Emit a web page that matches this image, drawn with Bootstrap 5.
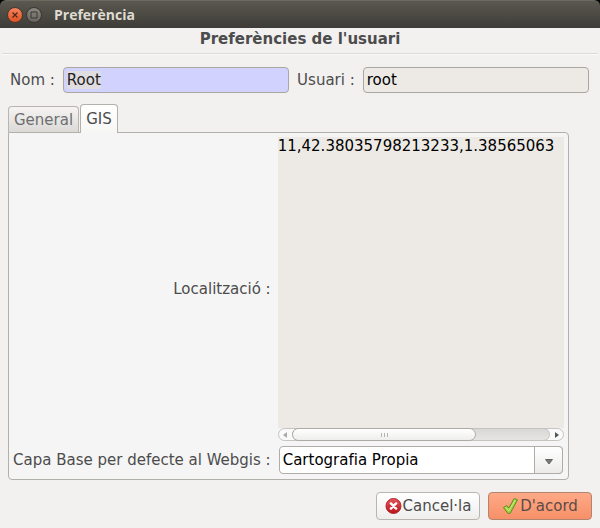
<!DOCTYPE html>
<html lang="ca">
<head>
<meta charset="utf-8">
<meta name="viewport" content="width=device-width, initial-scale=1">
<title>Preferència</title>
<link href="https://cdn.jsdelivr.net/npm/bootstrap@5.3.0/dist/css/bootstrap.min.css" rel="stylesheet">
<script src="https://cdn.jsdelivr.net/npm/bootstrap@5.3.0/dist/js/bootstrap.bundle.min.js"></script>
<style>
  body { font-family: "DejaVu Sans", sans-serif; font-size: 15px; line-height: 20px; color: #4c4c4c; background: #f2f1f0; }
  .titlebar { height: 28px; padding: 0 7px; background: linear-gradient(#5a584f, #3d3c38); border-top: 1px solid #6b6960; border-radius: 6px 6px 0 0; }
  .titlebar h1 { font: bold 14px/20px "Open Sans", "Noto Sans", sans-serif; color: #dfdbd2; margin: 0 0 0 9px; }
  .wm-btn { width: 16px; height: 16px; margin-right: 3px; }
  .heading { font-size: 15px; line-height: 20px; padding: 1px 0 4px; margin: 0 2px; border-bottom: 1px solid #dcdad8; box-shadow: 0 1px #fafafa; }
  .identity { padding: 13px 11px 11px 10px; }
  .field { min-width: 0; height: 26px; padding: 0 3px; border: 1px solid #aaa6a2; border-radius: 4px; color: #000; background: #edeae6; }
  .field-required { background: #d2d2ff linear-gradient(#dfdde0, #dfdde0) 3px 3px / 34px 18px no-repeat; color: #222; }
  .tabs { margin-left: 8px; gap: 1px; border: 0; }
  .tabs .nav-link { padding: 3px 5px 2px; border: 1px solid #b9b6b2; border-bottom: 0; border-radius: 4px 4px 0 0; margin: 0; color: #6f6f6f; background: linear-gradient(#f5f4f3, #dcdad7); }
  .tabs .nav-link.active { padding: 4px 5px; color: #4c4c4c; background: linear-gradient(#ffffff, #f6f6f5); border-color: #b3afab; margin-bottom: -1px; position: relative; z-index: 1; }
  .pane { margin: 0 31px 0 8px; padding: 4px 4px 5px; border: 1px solid #b3afab; border-radius: 0 4px 4px 4px; background: #f5f5f5; display: grid; grid-template-columns: max-content minmax(0, 1fr); column-gap: 7px; row-gap: 5px; align-items: center; }
  .location { height: 291px; padding: 0; border: 0; resize: none; overflow: hidden; white-space: pre; background: #edeae6; color: #000; line-height: 18px; }
  .scroller { height: 13px; border: 1px solid #c6c3c0; border-radius: 7px; background: #fafafa; }
  .scroller button { width: 13px; padding: 0; border: 0; background: none; }
  .track { margin: -1px 0; border: 1px solid #c6c3c0; border-radius: 7px; background: linear-gradient(#d9d8d6, #e6e5e3); }
  .thumb { width: 72%; height: 13px; margin: -1px; border: 1px solid #aeaba7; border-radius: 7px; background: linear-gradient(#ffffff, #efeeed); }
  .combo-wrap { margin: 0 1px; }
  .combo { height: 28px; padding: 0 32px 0 3px; border: 1px solid #b0aca8; border-radius: 4px; color: #000; appearance: none; background: #fff; }
  .combo-arrow { width: 29px; pointer-events: none; border: 1px solid #b0aca8; border-radius: 0 4px 4px 0; background: linear-gradient(#ffffff, #ecebea); }
  .actions { padding: 12px 8px 8px; }
  .action { width: 104px; height: 28px; padding: 0; font-size: 15px; line-height: 20px; border: 1px solid #b8b4b0; border-radius: 4px; color: #4c4c4c; background: linear-gradient(#ffffff, #efeeed); }
  .action-default { color: #5c4c45; border-color: #b48370; background: linear-gradient(#ffa987, #f69068); }
</style>
</head>
<body>
<header class="bg-black">
  <div class="titlebar d-flex align-items-center">
    <button type="button" class="wm-btn btn p-0 border-0 d-flex" aria-label="Tanca">
      <svg width="16" height="16" viewBox="0 0 16 16"><defs><linearGradient id="wc" x2="0" y2="1"><stop stop-color="#f68661"/><stop offset="1" stop-color="#e0501f"/></linearGradient></defs><circle cx="8" cy="8" r="7.5" fill="url(#wc)" stroke="#45352f"/><path d="M5.5 5.5l5 5M10.5 5.500l-5 5" stroke="#50281a" stroke-width="1.200"/></svg>
    </button>
    <button type="button" class="wm-btn btn p-0 border-0 d-flex" aria-label="Maximitza">
      <svg width="16" height="16" viewBox="0 0 16 16"><defs><linearGradient id="wm" x2="0" y2="1"><stop stop-color="#8b8982"/><stop offset="1" stop-color="#65635c"/></linearGradient></defs><circle cx="8" cy="8" r="7.5" fill="url(#wm)" stroke="#35342f"/><path d="M5 5h6v6h-6z" fill="none" stroke="#3a3934"/></svg>
    </button>
    <h1>Preferència</h1>
  </div>
</header>
<main>
  <h2 class="heading text-center fw-bold">Preferències de l'usuari</h2>
  <form>
    <div class="identity d-flex align-items-center gap-2">
      <label for="name" class="text-nowrap">Nom :</label>
      <input id="name" class="field field-required flex-fill w-50" type="text" value="Root">
      <label for="login" class="text-nowrap">Usuari :</label>
      <input id="login" class="field flex-fill w-50" type="text" value="root" readonly>
    </div>
    <div class="tabs nav nav-tabs align-items-end" role="tablist">
      <button type="button" class="nav-link" role="tab" aria-selected="false">General</button>
      <button type="button" class="nav-link active" role="tab" aria-selected="true" aria-controls="gis">GIS</button>
    </div>
    <section id="gis" class="pane" role="tabpanel">
      <label for="location" class="text-end">Localització :</label>
      <div>
        <textarea id="location" class="location d-block w-100" readonly>11,42.38035798213233,1.38565063</textarea>
        <div class="scroller d-flex">
          <button type="button" class="d-flex align-items-center justify-content-center" aria-label="Esquerra"><svg width="4" height="6" viewBox="0 0 4 6"><path d="M4 0v6L0 3z" fill="#aaa"/></svg></button>
          <div class="track flex-fill">
            <div class="thumb d-flex align-items-center justify-content-center"><svg width="8" height="4" viewBox="0 0 8 4"><path d="M1.5 0v4M4.5 0v4M7.5 0v4" stroke="#b5b5b5"/></svg></div>
          </div>
          <button type="button" class="d-flex align-items-center justify-content-center" aria-label="Dreta"><svg width="4" height="6" viewBox="0 0 4 6"><path d="M0 0v6l4-3z" fill="#555"/></svg></button>
        </div>
      </div>
      <label for="base" class="text-end">Capa Base per defecte al Webgis :</label>
      <div class="combo-wrap position-relative">
        <select id="base" class="combo d-block w-100"><option>Cartografia Propia</option></select>
        <span class="combo-arrow position-absolute top-0 end-0 h-100 d-flex align-items-center justify-content-center"><svg class="mt-1" width="8" height="6" viewBox="0 0 8 6"><path d="M.5.5h7L4 5z" fill="#777" stroke="#666"/></svg></span>
      </div>
    </section>
    <div class="actions d-flex justify-content-end gap-2">
      <button type="button" class="action btn d-flex align-items-center justify-content-center">
        <svg width="18" height="18" viewBox="0 0 18 18"><defs><linearGradient id="no" x2="0" y2="1"><stop stop-color="#e4565a"/><stop offset="1" stop-color="#b8141c"/></linearGradient></defs><circle cx="8.5" cy="9" r="7.5" fill="url(#no)" stroke="#b3242a"/><path d="M5.900 6.400l5.200 5.200M11.100 6.400l-5.200 5.200" stroke="#fff" stroke-width="2.4" stroke-linecap="round"/></svg>
        <span>Cancel·la</span>
      </button>
      <button type="submit" class="action action-default btn d-flex align-items-center justify-content-center">
        <svg width="18" height="18" viewBox="0 0 18 18"><path d="M1.500 10.500L4.500 8.500 6.800 11 12.200 1.500 15.500 2.800 8.200 16.300H5.800z" fill="#a5cf47" stroke="#5d8f1c" stroke-linejoin="round"/><path d="M3.300 10.500L7 13.700 13.300 3" fill="none" stroke="#cdea80"/></svg>
        <span>D'acord</span>
      </button>
    </div>
  </form>
</main>
</body>
</html>
